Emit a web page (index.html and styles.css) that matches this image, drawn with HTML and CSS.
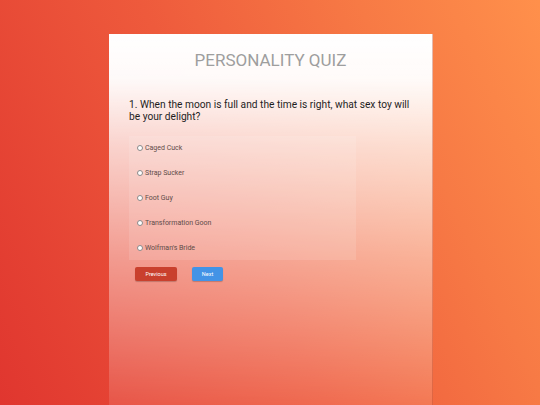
FILE: index.html
```html
<!DOCTYPE html>
<html>
<head>
<meta charset="utf-8">
<link rel="stylesheet" href="styles.css">
</head>
<body>
<div class="page">
  <div class="card">
    <h1 class="title">PERSONALITY QUIZ</h1>
    <p class="question">1. When the moon is full and the time is right, what sex toy will be your delight?</p>
    <div class="options">
      <label class="option"><span class="radio"></span>Caged Cuck</label>
      <label class="option"><span class="radio"></span>Strap Sucker</label>
      <label class="option"><span class="radio"></span>Foot Guy</label>
      <label class="option"><span class="radio"></span>Transformation Goon</label>
      <label class="option"><span class="radio"></span>Wolfman's Bride</label>
    </div>
    <div class="buttons">
      <button class="btn prev">Previous</button>
      <button class="btn next">Next</button>
    </div>
  </div>
</div>
</body>
</html>
```
FILE: styles.css
```css
* { box-sizing: border-box; }
html, body { margin: 0; padding: 0; height: 100%; }
body {
  font-family: Roboto, "Liberation Sans", sans-serif;
  background: linear-gradient(65deg, #e0362f 0%, #ee5a3c 45%, #f77a45 75%, #ff904b 100%);
  overflow: hidden;
}
.page {
  height: 405px;
  padding-top: 34px;
  display: flex;
  justify-content: center;
}
.card {
  width: 324px;
  height: 371px;
  background: linear-gradient(to bottom, rgba(255,255,255,1) 0%, rgba(255,255,255,0.97) 12%, rgba(255,255,255,0.75) 30%, rgba(255,255,255,0.45) 60%, rgba(255,255,255,0.1) 100%);
  border-right: 1px solid rgba(180,60,30,0.35);
  padding: 16px 20px 0 20px;
  margin-left: 2px;
}
.title {
  margin: 0;
  text-align: center;
  font-weight: 400;
  font-size: 17px;
  line-height: 20px;
  color: #9e9e9e;
}
.question {
  margin: 29px 0 0 0;
  font-size: 10.2px;
  line-height: 12px;
  color: #1e1e1e;
}
.options {
  margin-top: 13px;
  width: 227px;
  background: rgba(255,255,255,0.12);
  display: flex;
  flex-direction: column;
}
.option {
  display: flex;
  align-items: center;
  height: 24.8px;
  padding-left: 8px;
  font-size: 7px;
  color: #5e4c49;
}
.radio {
  width: 6px;
  height: 6px;
  border-radius: 50%;
  background: #fff;
  border: 1px solid #8a8a8a;
  margin-right: 2px;
}
.buttons {
  display: flex;
  gap: 15px;
  margin-top: 7px;
  padding-left: 6px;
}
.btn {
  height: 14px;
  border: none;
  border-radius: 2px;
  color: #fff;
  font-family: Roboto, "Liberation Sans", sans-serif;
  font-size: 5.5px;
  padding: 0;
  box-shadow: 0 1px 1px rgba(0,0,0,0.2);
}
.prev { width: 42px; background: #c9402d; }
.next { width: 31px; background: #4393e6; }
```
